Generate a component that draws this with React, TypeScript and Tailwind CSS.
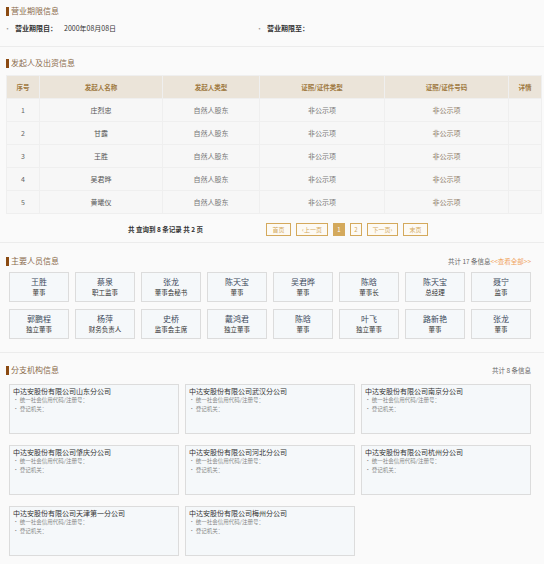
import React from "react";

const font = { fontFamily: '"Noto Sans CJK SC", "Noto Sans", sans-serif' };

const holders = [
  { no: 1, name: "庄烈忠" },
  { no: 2, name: "甘露" },
  { no: 3, name: "王胜" },
  { no: 4, name: "吴君晔" },
  { no: 5, name: "黄曦仪" },
];

const people = [
  { name: "王胜", role: "董事" },
  { name: "蔡泉", role: "职工监事" },
  { name: "张龙", role: "董事会秘书" },
  { name: "陈天宝", role: "董事" },
  { name: "吴君晔", role: "董事" },
  { name: "陈晗", role: "董事长" },
  { name: "陈天宝", role: "总经理" },
  { name: "聂宁", role: "监事" },
  { name: "郭鹏程", role: "独立董事" },
  { name: "杨萍", role: "财务负责人" },
  { name: "史桥", role: "监事会主席" },
  { name: "戴鸿君", role: "独立董事" },
  { name: "陈晗", role: "董事" },
  { name: "叶飞", role: "独立董事" },
  { name: "路新艳", role: "董事" },
  { name: "张龙", role: "董事" },
];

const branches = [
  "中达安股份有限公司山东分公司",
  "中达安股份有限公司武汉分公司",
  "中达安股份有限公司南京分公司",
  "中达安股份有限公司肇庆分公司",
  "中达安股份有限公司河北分公司",
  "中达安股份有限公司杭州分公司",
  "中达安股份有限公司天津第一分公司",
  "中达安股份有限公司梅州分公司",
];

function Title({ text, right }: { text: string; right?: React.ReactNode }) {
  return (
    <div className="flex items-center justify-between h-[12px] pr-[13px]">
      <div className="flex items-center">
        <span className="w-[3px] h-[9px] bg-[#8b4a12] mr-[2px]" />
        <span className="text-[8px] leading-none text-[#8a6a4c]">{text}</span>
      </div>
      {right}
    </div>
  );
}

function PageBtn({ label, active, w }: { label: string; active?: boolean; w: string }) {
  return (
    <span
      className={`h-[13px] ${w} flex items-center justify-center border text-[6px] leading-none ${
        active
          ? "bg-[#d4a95c] border-[#d4a95c] text-white"
          : "border-[#d4a95c] text-[#d4a95c] bg-[#fdfaf4]"
      }`}
    >
      {label}
    </span>
  );
}

export default function App() {
  const th = "border border-[#efefef] font-bold text-[#a07a42] text-[6.5px]";
  const td = "border border-[#efefef] text-[7px]";
  return (
    <div className="w-[544px] h-[564px] bg-[#fafafa] overflow-hidden" style={font}>
      {/* 营业期限信息 */}
      <div className="pt-[5px] pl-[6px] h-[47px] border-b border-[#ececec]">
        <Title text="营业期限信息" />
        <div className="flex mt-[8px] text-[7px] leading-none -ml-[2px]">
          <div className="w-[252px] flex">
            <span className="text-[#999]">·</span>
            <span className="font-bold text-[#333] ml-[4px]">营业期限自：</span>
            <span className="text-[#333] ml-[7px]">2000年08月08日</span>
          </div>
          <div className="flex">
            <span className="text-[#999]">·</span>
            <span className="font-bold text-[#333] ml-[4px]">营业期限至：</span>
          </div>
        </div>
      </div>

      {/* 发起人及出资信息 */}
      <div className="pt-[10px] pl-[6px] pr-[3px] h-[196px] border-b border-[#ececec]">
        <Title text="发起人及出资信息" />
        <table className="mt-[6px] w-[535px] border-collapse table-fixed text-center leading-none">
          <colgroup>
            <col className="w-[33px]" />
            <col className="w-[123px]" />
            <col className="w-[97px]" />
            <col className="w-[125px]" />
            <col className="w-[124px]" />
            <col className="w-[33px]" />
          </colgroup>
          <thead>
            <tr className="h-[23px] bg-[#ebe4d9]">
              <th className={th}>序号</th>
              <th className={th}>发起人名称</th>
              <th className={th}>发起人类型</th>
              <th className={th}>证照/证件类型</th>
              <th className={th}>证照/证件号码</th>
              <th className={th}>详情</th>
            </tr>
          </thead>
          <tbody>
            {holders.map((h) => (
              <tr key={h.no} className="h-[23px] bg-[#f7f7f7]">
                <td className={`${td} text-[#666]`}>{h.no}</td>
                <td className={`${td} text-[#555]`}>{h.name}</td>
                <td className={`${td} text-[#777]`}>自然人股东</td>
                <td className={`${td} text-[#777]`}>非公示项</td>
                <td className={`${td} text-[#8f7d6a]`}>非公示项</td>
                <td className={td}></td>
              </tr>
            ))}
          </tbody>
        </table>
        <div className="flex items-center mt-[9px] text-[6.5px] leading-none">
          <span className="ml-[122px] w-[138px] text-[#333] font-bold">共 查询到 8 条记录 共 2 页</span>
          <div className="flex gap-[5px]">
            <PageBtn label="首页" w="w-[25px]" />
            <PageBtn label="‹上一页" w="w-[32px]" />
            <PageBtn label="1" active w="w-[12px]" />
            <PageBtn label="2" w="w-[12px]" />
            <PageBtn label="下一页›" w="w-[31px]" />
            <PageBtn label="末页" w="w-[25px]" />
          </div>
        </div>
      </div>

      {/* 主要人员信息 */}
      <div className="pt-[12px] pl-[6px] h-[110px] border-b border-[#ececec]">
        <Title
          text="主要人员信息"
          right={
            <span className="text-[6.5px] text-[#666] leading-none">
              共计 17 条信息<span className="text-[#f0a35a]">&lt;&lt;查看全部&gt;&gt;</span>
            </span>
          }
        />
        <div className="grid grid-cols-[repeat(8,60px)] gap-x-[6px] gap-y-[7px] mt-[5px] ml-[3px]">
          {people.map((p, i) => (
            <div
              key={i}
              className="h-[30px] border border-[#dcdcdc] bg-[#f5f8fa] flex flex-col items-center justify-center leading-none"
            >
              <span className="text-[8px] text-[#3d4a5c]">{p.name}</span>
              <span className="text-[6.5px] text-[#333] mt-[3px]">{p.role}</span>
            </div>
          ))}
        </div>
      </div>

      {/* 分支机构信息 */}
      <div className="pt-[11px] pl-[6px]">
        <Title
          text="分支机构信息"
          right={<span className="text-[6.5px] text-[#666] leading-none">共计 8 条信息</span>}
        />
        <div className="grid grid-cols-[repeat(3,170px)] gap-x-[6px] gap-y-[11px] mt-[8px] ml-[3px]">
          {branches.map((b) => (
            <div key={b} className="h-[50px] border border-[#dcdcdc] bg-[#f5f8fa] px-[3px] pt-[3px] leading-none">
              <div className="text-[7px] text-[#333]">{b}</div>
              <div className="text-[5.5px] text-[#888] mt-[3px]">· 统一社会信用代码/注册号：</div>
              <div className="text-[5.5px] text-[#888] mt-[3px]">· 登记机关：</div>
            </div>
          ))}
        </div>
      </div>
    </div>
  );
}
